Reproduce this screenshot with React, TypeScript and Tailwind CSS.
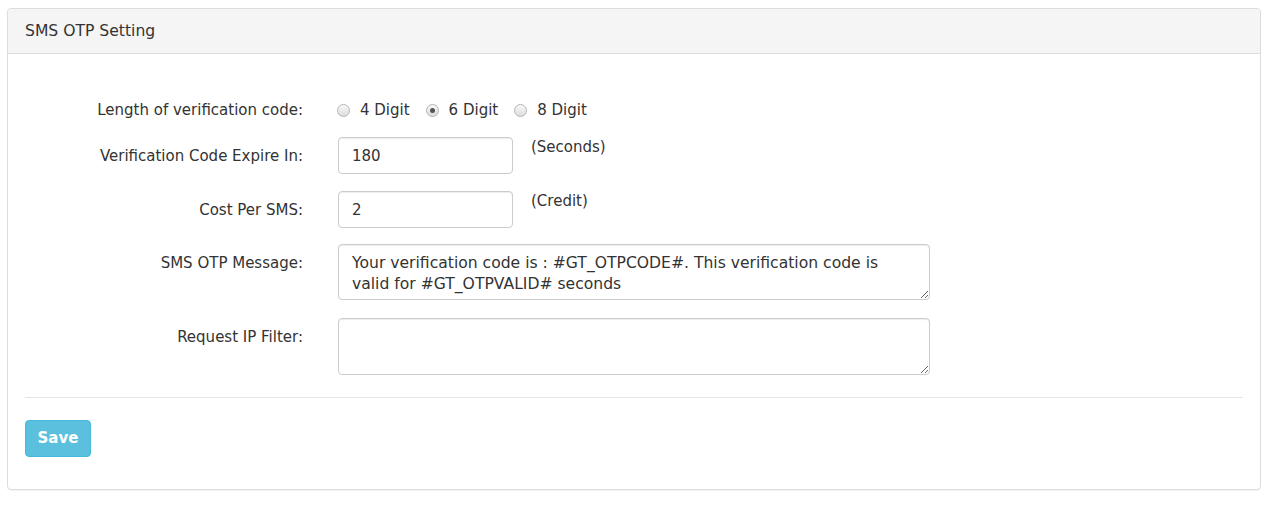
import React, { useState } from "react";

const font = { fontFamily: '"DejaVu Sans", Verdana, sans-serif' };

function Radio({ checked, label, onClick }: { checked: boolean; label: string; onClick: () => void }) {
  return (
    <label className="flex items-center cursor-pointer mr-[16px]" onClick={onClick}>
      <span className="w-[13px] h-[13px] rounded-full border border-[#b4b4b4] bg-gradient-to-b from-[#fafafa] to-[#dcdcdc] flex items-center justify-center">
        {checked && <span className="w-[5px] h-[5px] rounded-full bg-[#555]" />}
      </span>
      <span className="ml-[10px]">{label}</span>
    </label>
  );
}

function Row({ label, children, className = "" }: { label: string; children: React.ReactNode; className?: string }) {
  return (
    <div className={`flex ${className}`}>
      <div className="w-[278px] shrink-0 text-right pt-[9px] leading-[20px]">{label}</div>
      <div className="ml-[35px] flex items-start">{children}</div>
    </div>
  );
}

export default function App() {
  const [digits, setDigits] = useState(6);

  return (
    <div className="bg-white w-[1271px] h-[506px] pt-[8px] pl-[7px] text-[15px] text-[#333]" style={font}>
      <div className="w-[1254px] h-[482px] border border-[#dddddd] rounded-[4px] shadow-[0_1px_1px_rgba(0,0,0,0.05)]">
        {/* Header */}
        <div className="h-[45px] bg-[#f5f5f5] border-b border-[#dddddd] rounded-t-[4px] pl-[17px] pt-[2px] flex items-center text-[15.6px]">
          SMS OTP Setting
        </div>

        <div className="px-[17px]">
          {/* Length of code */}
          <div className="flex items-center h-[36px] mt-[38px]">
            <div className="w-[278px] shrink-0 text-right leading-[20px]">Length of verification code:</div>
            <div className="ml-[34px] flex items-center">
              {[4, 6, 8].map((d) => (
                <Radio key={d} checked={digits === d} label={`${d} Digit`} onClick={() => setDigits(d)} />
              ))}
            </div>
          </div>

          <Row label="Verification Code Expire In:" className="mt-[9px]">
            <input
              defaultValue="180"
              className="w-[175px] h-[37px] border border-[#cccccc] rounded-[4px] px-[13px] outline-none shadow-[inset_0_1px_1px_rgba(0,0,0,0.075)]"
              style={font}
            />
            <span className="ml-[18px] leading-[20px]">(Seconds)</span>
          </Row>

          <Row label="Cost Per SMS:" className="mt-[17px]">
            <input
              defaultValue="2"
              className="w-[175px] h-[37px] border border-[#cccccc] rounded-[4px] px-[13px] outline-none shadow-[inset_0_1px_1px_rgba(0,0,0,0.075)]"
              style={font}
            />
            <span className="ml-[18px] leading-[20px]">(Credit)</span>
          </Row>

          <Row label="SMS OTP Message:" className="mt-[16px]">
            <textarea
              defaultValue="Your verification code is : #GT_OTPCODE#. This verification code is valid for #GT_OTPVALID# seconds"
              className="w-[592px] h-[56px] border border-[#cccccc] rounded-[4px] px-[13px] pt-[8px] pb-[6px] leading-[21px] text-[15.6px] outline-none resize-y shadow-[inset_0_1px_1px_rgba(0,0,0,0.075)]"
              style={font}
            />
          </Row>

          <Row label="Request IP Filter:" className="mt-[18px]">
            <textarea
              className="w-[592px] h-[57px] border border-[#cccccc] rounded-[4px] px-[13px] pt-[8px] pb-[6px] leading-[21px] text-[15.6px] outline-none resize-y shadow-[inset_0_1px_1px_rgba(0,0,0,0.075)]"
              style={font}
            />
          </Row>

          <div className="border-t border-[#e5e5e5] mt-[22px]" />

          <button
            className="mt-[22px] w-[66px] h-[37px] bg-[#5bc0de] border border-[#46b8da] rounded-[4px] text-white font-bold"
            style={font}
          >
            Save
          </button>
        </div>
      </div>
    </div>
  );
}
